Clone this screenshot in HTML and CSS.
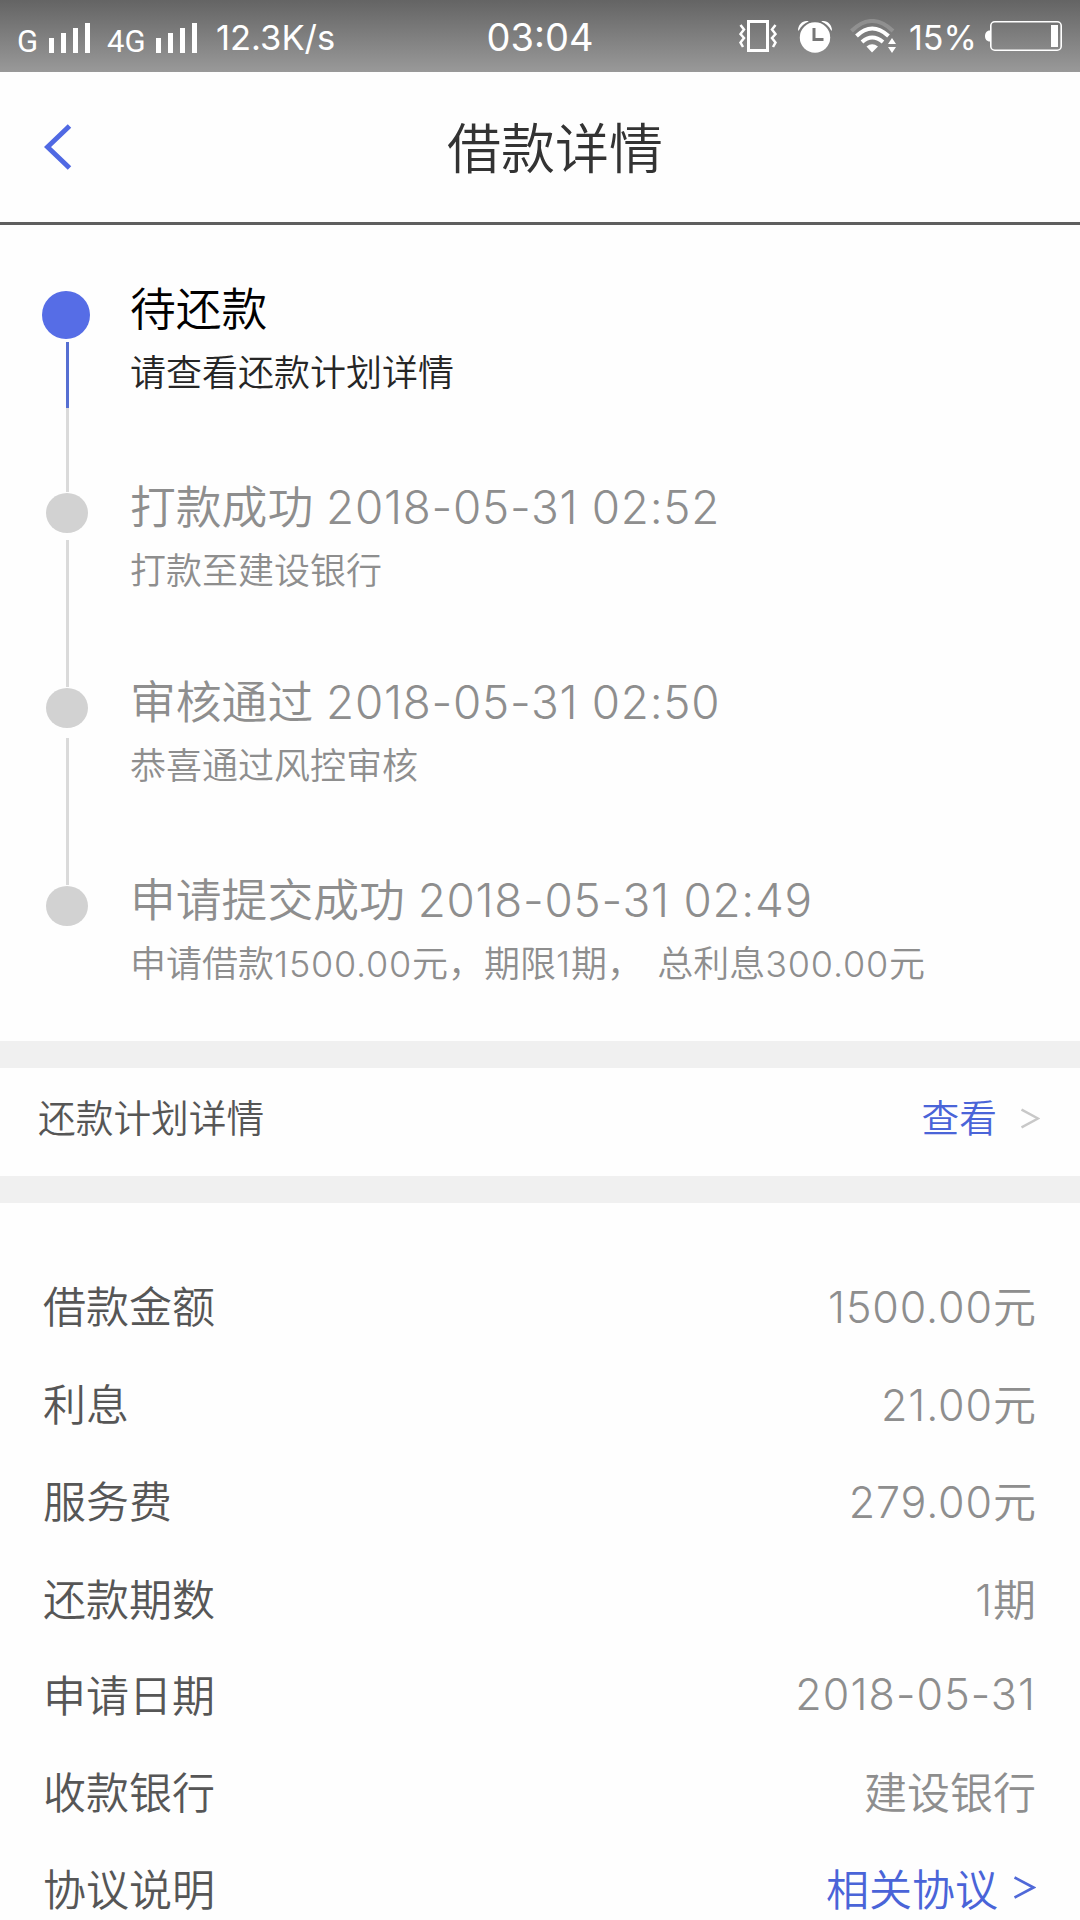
FILE: index.html
```html
<!DOCTYPE html>
<html lang="zh-CN">
<head>
    <meta charset="UTF-8">
    <meta name="viewport" content="width=device-width, initial-scale=1.0">
    <title>借款详情</title>
    <link rel="stylesheet" href="styles.css">
</head>
<body>

<div class="status-bar">
    <div class="status-left">
        <span class="carrier">G</span>
        <svg class="signal" width="41" height="30" viewBox="0 0 41 30" fill="#fff">
            <path d="M0 15h5v15H0zM12 10h5v20h-5zM24 5h5v25h-5zM36 0h5v30h-5z"/>
        </svg>
        <span class="carrier carrier-4g">4G</span>
        <svg class="signal" width="41" height="30" viewBox="0 0 41 30" fill="#fff">
            <path d="M0 15h5v15H0zM12 10h5v20h-5zM24 5h5v25h-5zM36 0h5v30h-5z"/>
        </svg>
        <span class="speed">12.3K/s</span>
    </div>
    <div class="clock">03:04</div>
    <div class="status-right">
        <svg class="vibrate" width="38" height="32" viewBox="0 0 38 32" fill="none" stroke="#fff">
            <rect x="9.5" y="1.5" width="19" height="29" stroke-width="3"/>
            <path d="M1.5 5L5 9.5L1.5 14L5 18L1.5 22.500L4 27M36.500 5L33 9.500L36.500 14L33 18L36.500 22.500L34 27" stroke-width="2.500"/>
        </svg>
        <svg class="alarm" width="34" height="33" viewBox="0 0 34 33">
            <circle cx="17" cy="17.500" r="15.200" fill="#fff"/>
            <path d="M0 10.500C0 4 6 -.5 10.800 1.500C6.500 3 3 6 .8 10.500zM34 10.500C34 4 28 -.5 23.200 1.500C27.500 3 31 6 33.200 10.500z" fill="#fff"/>
            <path d="M16 8v11.500h9.500" fill="none" stroke="#777" stroke-width="3"/>
        </svg>
        <svg class="wifi" width="46" height="34" viewBox="0 0 46 34" fill="none" stroke="#fff">
            <path d="M1.500 12Q22 -8 43 12" stroke="#aaa" stroke-opacity=".5" stroke-width="4"/>
            <path d="M6.500 17Q22 2 38.500 17M12 23Q22 14 33 23" stroke-width="4"/>
            <path d="M16.500 27.500Q22 23 28 27.500L22 33.500z" fill="#fff" stroke="none"/>
            <path d="M38 25L42 19L46 25zM38 28h8L42 34z" fill="#fff" stroke="none"/>
        </svg>
        <span class="percent">15%</span>
        <svg class="battery" width="77" height="30" viewBox="0 0 77 30">
            <rect x="5.800" y=".8" width="70.400" height="28.400" rx="4" fill="none" stroke="#fff" stroke-width="1.600"/>
            <path d="M5 9.500C1.500 9.500 0 12 0 15s1.500 5.500 5 5.500z" fill="#fff"/>
            <rect x="66" y="4" width="7" height="22" fill="#fff"/>
        </svg>
    </div>
</div>

<header>
    <svg class="back" width="28" height="46" viewBox="0 0 28 46" fill="none" stroke="#5069e3" stroke-width="5">
        <path d="M25.500 2L3.500 23L25.500 44"/>
    </svg>
    <h1>借款详情</h1>
</header>

<div class="timeline">
    <div class="step current">
        <div class="marker">
            <i class="dot"></i>
            <i class="line line-active"></i>
            <i class="line line-rest"></i>
        </div>
        <div class="step-text">
            <h2>待还款</h2>
            <p>请查看还款计划详情</p>
        </div>
    </div>
    <div class="step step-paid">
        <div class="marker">
            <i class="line line-in"></i>
            <i class="dot"></i>
            <i class="line line-rest"></i>
        </div>
        <div class="step-text">
            <h2>打款成功 <span class="time">2018-05-31 02:52</span></h2>
            <p>打款至建设银行</p>
        </div>
    </div>
    <div class="step step-checked">
        <div class="marker">
            <i class="line line-in"></i>
            <i class="dot"></i>
            <i class="line line-rest"></i>
        </div>
        <div class="step-text">
            <h2>审核通过 <span class="time">2018-05-31 02:50</span></h2>
            <p>恭喜通过风控审核</p>
        </div>
    </div>
    <div class="step step-applied">
        <div class="marker">
            <i class="line line-in"></i>
            <i class="dot"></i>
        </div>
        <div class="step-text">
            <h2>申请提交成功 <span class="time">2018-05-31 02:49</span></h2>
            <p>申请借款<span class="num">1500.00</span>元，期限<span class="num">1</span>期，&nbsp;&nbsp;总利息<span class="num">300.00</span>元</p>
        </div>
    </div>
</div>

<div class="plan">
    <span>还款计划详情</span>
    <a class="plan-link">查看
        <svg width="19" height="21" viewBox="0 0 19 21" fill="none" stroke="#c8c8c8" stroke-width="2.500">
            <path d="M.5 1.500L17 10.500L.5 19.500"/>
        </svg>
    </a>
</div>

<div class="details">
    <div class="row"><span>借款金额</span><span class="value"><span class="amount">1500.00</span>元</span></div>
    <div class="row"><span>利息</span><span class="value"><span class="amount">21.00</span>元</span></div>
    <div class="row"><span>服务费</span><span class="value"><span class="amount">279.00</span>元</span></div>
    <div class="row"><span>还款期数</span><span class="value"><span class="amount">1</span>期</span></div>
    <div class="row"><span>申请日期</span><span class="value date">2018-05-31</span></div>
    <div class="row"><span>收款银行</span><span class="value">建设银行</span></div>
    <div class="row">
        <span>协议说明</span>
        <a class="value link">相关协议
            <svg width="22" height="23" viewBox="0 0 22 23" fill="none" stroke="#5069d8" stroke-width="2.600">
                <path d="M.5 1.500L19.500 11.500L.5 21.500"/>
            </svg>
        </a>
    </div>
</div>

</body>
</html>
```
FILE: styles.css
```css
body {
    font-family: Inter, "Noto Sans CJK SC", sans-serif;
    font-weight: 300;
    margin: 0;
    height: 1920px;
    overflow: hidden;
    background-color: #fefefe;
}
h1, h2, p {
    margin: 0;
    font-weight: 350;
}
svg {
    display: block;
    flex: none;
}
.status-bar {
    display: grid;
    grid-template-columns: 440px 200px 440px;
    height: 72px;
    box-sizing: border-box;
    color: #fff;
    font-weight: 400;
    background: linear-gradient(#646464, #999);
}
.status-left, .status-right {
    display: flex;
    align-items: center;
    height: 76px;
}
.status-left {
    padding-left: 17px;
}
.status-right {
    justify-content: flex-end;
    height: 72px;
    padding-right: 18px;
}
.carrier {
    font-family: Roboto, sans-serif;
    font-size: 31px;
    width: 32px;
    padding-top: 7px;
}
.carrier-4g {
    width: 49px;
    margin-left: 17px;
}
.speed {
    font-size: 34.5px;
    margin-left: 19px;
    padding-bottom: 1px;
}
.clock {
    font-size: 38px;
    line-height: 75px;
    text-align: center;
}
.vibrate {
    margin-right: 1px;
}
.alarm {
    margin-left: 20px;
}
.wifi {
    margin-left: 18px;
}
.percent {
    font-size: 34px;
    width: 76px;
    margin-left: 13px;
    padding-top: 3px;
    box-sizing: border-box;
}
header {
    display: flex;
    align-items: center;
    height: 150px;
    padding-left: 44px;
    border-bottom: 3px solid #5e5e5e;
}
header h1 {
    flex: 1;
    margin: 0 0 3px 375px;
    font-size: 54px;
    color: #333;
}
.timeline {
    padding: 49px 42px 41px;
    color: #8e8e8e;
}
.step {
    display: flex;
    height: 198px;
}
.step-paid {
    height: 195px;
}
.step-applied {
    height: 135px;
}
.marker {
    display: flex;
    flex-direction: column;
    align-items: center;
    width: 51px;
}
.dot {
    width: 42px;
    height: 40px;
    margin: 1px 1px 7px 0;
    border-radius: 50%;
    background-color: #d2d2d2;
}
.step-checked .dot {
    margin-bottom: 10px;
}
.current .dot {
    width: 48px;
    height: 48px;
    margin: 17px 3px 3px 0;
    background-color: #566de6;
}
.line {
    width: 3px;
    background-color: #dadada;
}
.line-in {
    height: 20px;
}
.line-active {
    height: 66px;
    background-color: #566fd2;
}
.line-rest {
    flex: 1;
}
.step-text {
    margin-left: 37px;
    padding-top: 2px;
    white-space: nowrap;
}
.step h2 {
    font-size: 45.8px;
    line-height: 68px;
}
.step p {
    font-size: 36px;
    line-height: 58px;
    word-spacing: -3px;
}
.time {
    font-weight: 300;
    letter-spacing: 0.75px;
}
.num {
    font-weight: 300;
    letter-spacing: 0.75px;
}
.current h2 {
    color: #000;
}
.current p {
    color: #262626;
}
.plan {
    display: flex;
    justify-content: space-between;
    height: 108px;
    padding: 0 40px 0 38px;
    border-top: 27px solid #f0f0f0;
    border-bottom: 27px solid #f0f0f0;
    font-size: 37.7px;
    font-weight: 350;
    line-height: 100px;
    color: #565656;
}
.plan-link {
    display: flex;
    align-items: center;
    gap: 24px;
    height: 100px;
    color: #4a64d8;
}
.details {
    display: grid;
    grid-template-rows: 99px 97px 98px 97px 96px 97px 98px;
    padding: 51px 44px 0 43px;
    font-size: 43px;
    font-weight: 350;
    color: #565656;
}
.row {
    display: flex;
    justify-content: space-between;
    align-items: center;
}
.value {
    color: #8e8e8e;
}
.amount {
    font-weight: 300;
    letter-spacing: 0.9px;
}
.date {
    padding-top: 2px;
    font-weight: 300;
    letter-spacing: 1.1px;
}
.link {
    display: flex;
    align-items: center;
    gap: 16px;
    color: #4a64d8;
}
```
